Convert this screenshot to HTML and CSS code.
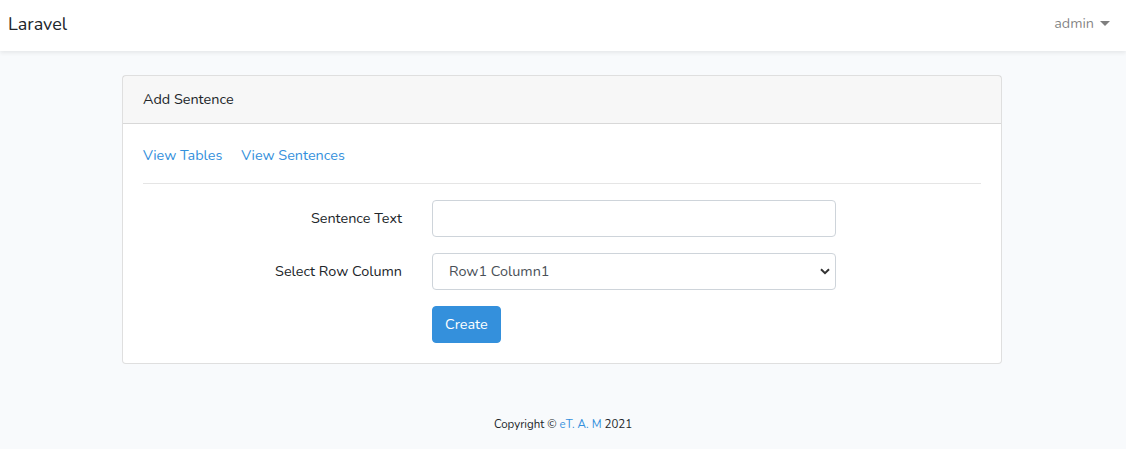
FILE: index.html
```html
<!DOCTYPE html>
<html lang="en">
<head>
<meta charset="utf-8">
<title>Laravel</title>
<link rel="stylesheet" href="styles.css">
</head>
<body>
<nav class="navbar">
  <a class="brand" href="#">Laravel</a>
  <a class="user" href="#">admin <span class="caret"></span></a>
</nav>
<main class="main">
  <div class="card">
    <div class="card-header">Add Sentence</div>
    <div class="card-body">
      <div class="links">
        <a href="#">View Tables</a>
        <a href="#">View Sentences</a>
      </div>
      <hr class="sep">
      <form class="form">
        <div class="form-row">
          <label class="label" for="text">Sentence Text</label>
          <input class="control" id="text" type="text">
        </div>
        <div class="form-row">
          <label class="label" for="rc">Select Row Column</label>
          <select class="control select" id="rc">
            <option>Row1 Column1</option>
          </select>
        </div>
        <div class="form-row last">
          <span class="label"></span>
          <div><button type="button" class="btn">Create</button></div>
        </div>
      </form>
    </div>
  </div>
</main>
<footer class="footer">Copyright © <a href="#">eT. A. M</a> 2021</footer>
</body>
</html>
```

FILE: styles.css
```css
* { box-sizing: border-box; }
html, body { margin: 0; }
body {
  background: #f8fafc;
  font-family: "Nunito", "Noto Sans", sans-serif;
  font-size: 14.4px;
  line-height: 1.6;
  color: #212529;
}
a { color: #3490dc; text-decoration: none; }

.navbar {
  background: #fff;
  height: 51px;
  display: flex;
  align-items: center;
  justify-content: space-between;
  padding: 0 16px 0 8px;
  box-shadow: 0 2px 4px rgba(0,0,0,.075);
}
.brand { color: #212529; font-size: 18px; margin-top: -2px; }
.user { color: rgba(0,0,0,.5); display: flex; align-items: center; gap: 6px; margin-top: -4px; }
.caret {
  width: 0; height: 0;
  border-left: 5px solid transparent;
  border-right: 5px solid transparent;
  border-top: 5px solid rgba(0,0,0,.5);
}

.main { padding: 24px 2px 24px 0; }
.card {
  width: 880px;
  margin: 0 auto;
  background: #fff;
  border: 1px solid rgba(0,0,0,.125);
  border-radius: 4px;
}
.card-header {
  background: rgba(0,0,0,.03);
  border-bottom: 1px solid rgba(0,0,0,.125);
  padding: 12px 20px;
  line-height: 23px;
}
.card-body { padding: 20px; }
.links { display: flex; gap: 19px; line-height: 23px; }
.sep { border: 0; border-top: 1px solid rgba(0,0,0,.1); margin: 16px 0; }

.form-row {
  display: grid;
  grid-template-columns: 259px 404px;
  column-gap: 30px;
  margin-bottom: 16px;
  align-items: start;
}
.form-row.last { margin-bottom: 0; }
.label { text-align: right; padding-top: 7px; line-height: 23px; }
.control {
  display: block;
  width: 404px;
  height: 37px;
  border: 1px solid #ced4da;
  border-radius: 4px;
  background: #fff;
  font: inherit;
  color: #495057;
  padding: 6px 12px;
}
.select {
  -webkit-appearance: none;
  appearance: none;
  background-image: url("data:image/svg+xml,%3Csvg xmlns='http://www.w3.org/2000/svg' width='10' height='7' viewBox='0 0 10 7'%3E%3Cpath d='M1 1.2l4 4 4-4' fill='none' stroke='%23333' stroke-width='2'/%3E%3C/svg%3E");
  background-repeat: no-repeat;
  background-position: right 5px center;
  padding-left: 16px;
}
.btn {
  background: #3490dc;
  border: 1px solid #3490dc;
  color: #fff;
  font: inherit;
  line-height: 23px;
  padding: 6px 12px;
  border-radius: 4px;
}

.footer {
  text-align: center;
  font-size: 11.5px;
  color: #212529;
  padding-top: 27px;
}
```
